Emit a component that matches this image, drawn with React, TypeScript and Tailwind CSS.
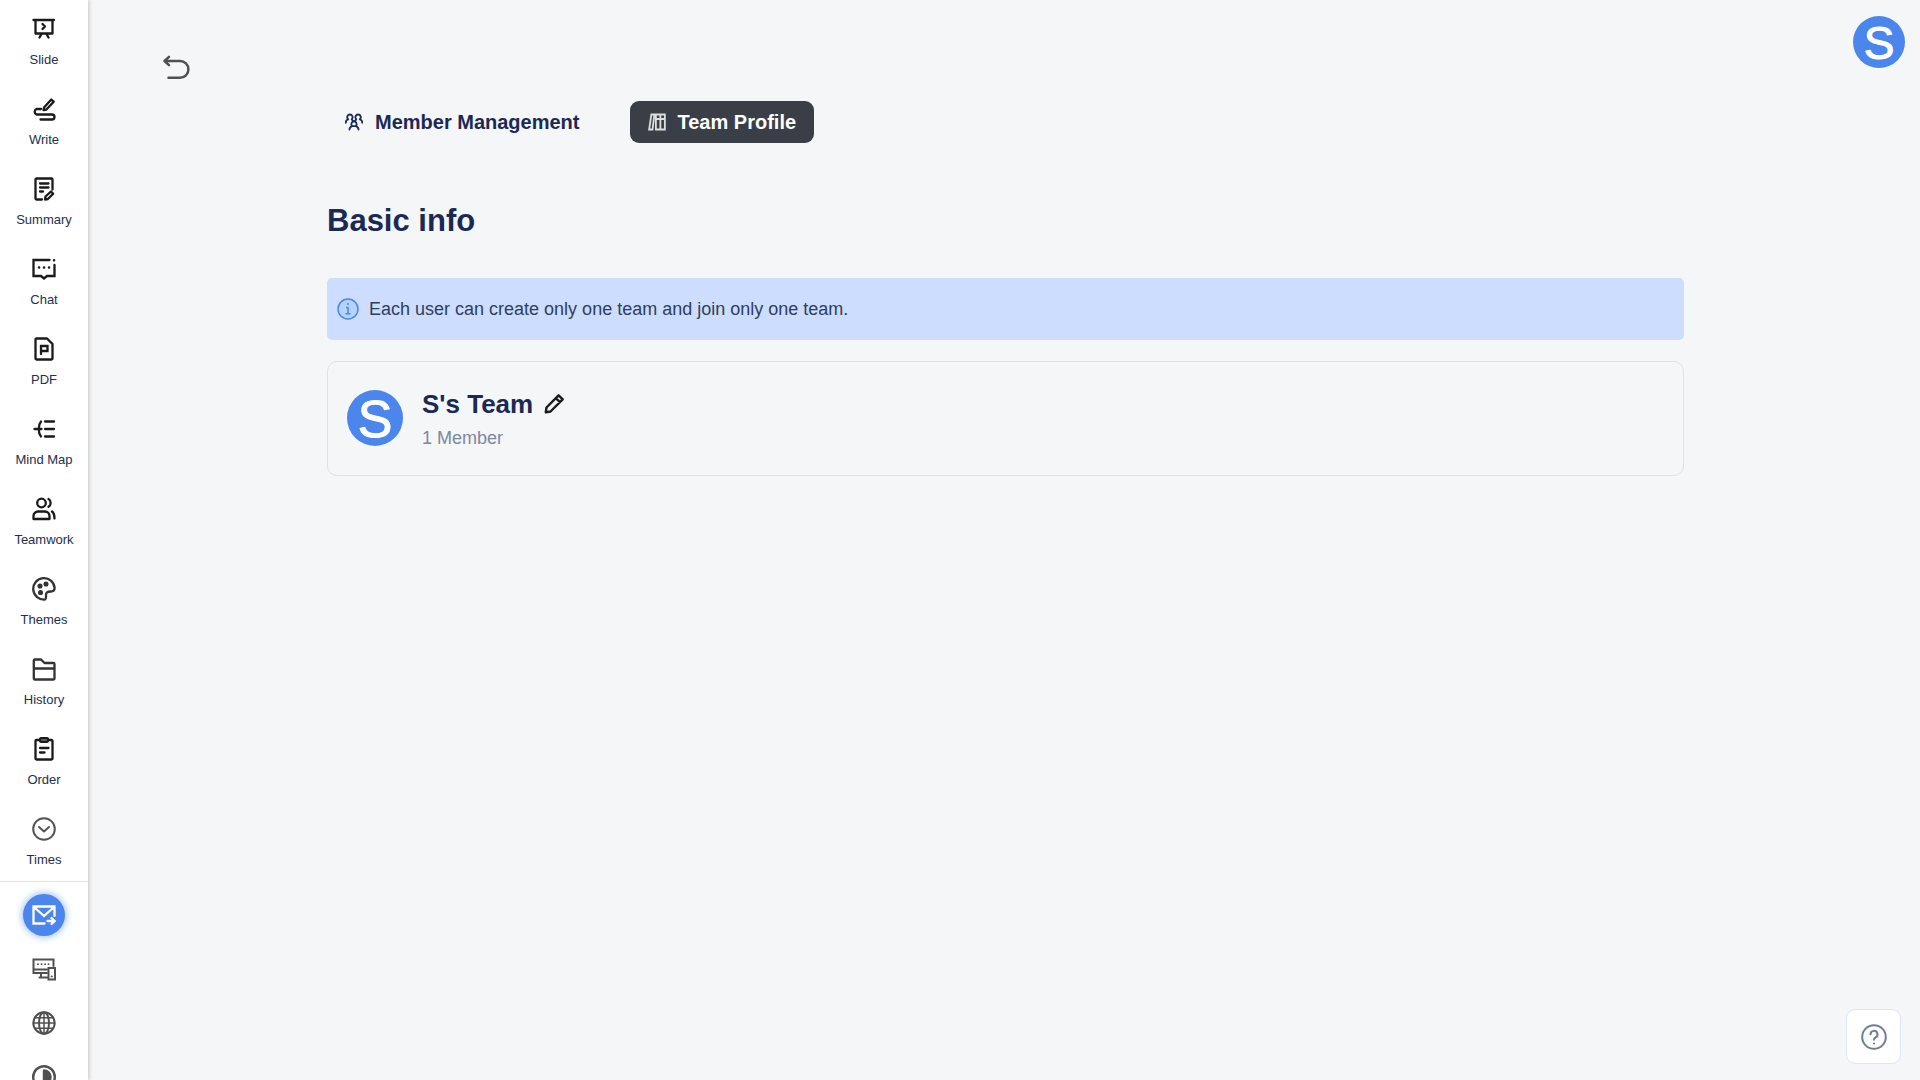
import type { ReactNode } from "react";

type IconProps = { children: ReactNode; className?: string; width?: number };

function Icon({ children, className = "size-6", width = 2.3 }: IconProps) {
  return (
    <svg
      viewBox="0 0 24 24"
      fill="none"
      stroke="currentColor"
      strokeWidth={width}
      strokeLinecap="round"
      strokeLinejoin="round"
      className={className}
      aria-hidden="true"
    >
      {children}
    </svg>
  );
}

const NAV = [
  {
    label: "Slide",
    icon: (
      <Icon>
        <path d="M1.500 3h20.500M3.500 3v13.500h17V3M10.500 7l2.500 2.500-2.500 2.500M9.500 17l-2 3.500M14.500 17l2 3.500" />
      </Icon>
    ),
  },
  {
    label: "Write",
    icon: (
      <Icon>
        <path d="M12 10.500 19.300 2.500l2.400 2.200-7.300 7.800-2.900.6z" />
        <path d="M9 12H4.500a3 3 0 0 0 0 5.500h15.500a2.500 2.500 0 0 1 0 5H8.500" />
      </Icon>
    ),
  },
  {
    label: "Summary",
    icon: (
      <Icon>
        <path d="M20.500 12.500V2.500a1 1 0 0 0-1-1h-15a1 1 0 0 0-1 1v19a1 1 0 0 0 1 1H10M8 6.500h8.500M8 10.500h8.500M8 14.500h3M13.500 19.500l5.500-5 2.200 2.200-5.300 5.300-2.800.5z" />
      </Icon>
    ),
  },
  {
    label: "Chat",
    icon: (
      <Icon>
        <path d="M17.500 3h-16v16H9l3 2.500 3-2.500h7.500V8" strokeLinejoin="miter" />
        <path d="M22 3.200h.1M7 10.500h.1M12 10.500h.1M17 10.500h.1" strokeWidth="2.500" />
      </Icon>
    ),
  },
  {
    label: "PDF",
    icon: (
      <Icon>
        <path d="M3.500 2.500a1 1 0 0 1 1-1H15l5.500 5.500v14.500a1 1 0 0 1-1 1h-15a1 1 0 0 1-1-1z" />
        <path d="M9 17V9h6.500v5H9" strokeLinejoin="miter" />
      </Icon>
    ),
  },
  {
    label: "Mind Map",
    icon: (
      <Icon>
        <path d="M13 4.500h9M13 12h9M13 19.500h9M2.500 12h7M9 4.500c-3 3.500-3 11.500 0 15" />
      </Icon>
    ),
  },
  {
    label: "Teamwork",
    icon: (
      <Icon>
        <circle cx="9.500" cy="6" r="4.300" />
        <path d="M1.500 22v-3a4.500 4.500 0 0 1 4.500-4.500h7a4.500 4.500 0 0 1 4.500 4.500v3zM16.500 2c2.800 1.500 2.800 6.300 0 7.800M20 14.500c1.700 1.300 2.500 3 2.500 7" />
      </Icon>
    ),
  },
  {
    label: "Themes",
    icon: (
      <Icon className="size-6 text-[#333]">
        <path d="M13 22.500A10.700 10.700 0 1 1 22.600 11c0 2.300-1.500 3.500-3.800 3.500-3.500 0-5 1.300-4.800 4 .1 2 .3 3.500-1 4z" />
        <g fill="currentColor" strokeWidth="1.500">
          <circle cx="8" cy="9" r="1.800" />
          <circle cx="14" cy="7" r="1.800" />
          <circle cx="8.500" cy="15.500" r="1.800" />
        </g>
      </Icon>
    ),
  },
  {
    label: "History",
    icon: (
      <Icon className="size-6 text-[#333]">
        <path d="M1.800 21.500v-18a1 1 0 0 1 1-1H9l3.500 3.500h9a1 1 0 0 1 1 1v14.500a1 1 0 0 1-1 1H2.800a1 1 0 0 1-1-1zM2 11.500h20.500" />
      </Icon>
    ),
  },
  {
    label: "Order",
    icon: (
      <Icon>
        <path d="M8 3H4.500a1 1 0 0 0-1 1v17.500a1 1 0 0 0 1 1h15a1 1 0 0 0 1-1V4a1 1 0 0 0-1-1H16M8 11h8.500M8 15.500h4.500" />
        <rect x="8" y="1.200" width="8" height="3.600" rx="1" fill="#777" />
      </Icon>
    ),
  },
  {
    label: "Times",
    icon: (
      <Icon className="size-6 text-[#555]" width={2}>
        <circle cx="12" cy="12" r="10.800" />
        <path d="M7 10l5 4.500 5-4.500" />
      </Icon>
    ),
  },
];

const TOOLS = [
  {
    label: "Devices",
    icon: (
      <Icon width={2}>
        <path d="M15 16H1.500V2.500h20V9M2 12.500h13M9 16.500v3.500M7.500 20.500h8" strokeLinejoin="miter" />
        <path d="M6 7.200h.1M9.500 7.200h.1M13 7.200h.1M16.500 7.200h.1" strokeWidth="1.800" />
        <path d="M16.500 11h6.500v11.500h-6.500zM19.700 19.500h.1" strokeLinejoin="miter" />
      </Icon>
    ),
  },
  {
    label: "Language",
    icon: (
      <Icon width={2}>
        <circle cx="12" cy="12" r="10.700" />
        <ellipse cx="12" cy="12" rx="5" ry="10.700" />
        <path d="M12 1.500v21M1.500 12h21M3 6.800h18M3 17.200h18" strokeWidth="1.500" />
      </Icon>
    ),
  },
  {
    label: "Appearance",
    icon: (
      <Icon width={2.4}>
        <circle cx="12" cy="12" r="10.800" />
        <path d="M12 5.500a6.500 6.500 0 0 1 0 13z" fill="currentColor" />
      </Icon>
    ),
  },
];

function Avatar({ className }: { className: string }) {
  return (
    <div
      className={`flex shrink-0 items-center justify-center rounded-full bg-[#4a86ec] pt-0.5 leading-none text-white [-webkit-text-stroke:1px_white] ${className}`}
    >
      S
    </div>
  );
}

function Sidebar() {
  return (
    <nav className="z-10 flex w-[88px] shrink-0 flex-col overflow-hidden bg-white shadow-[1px_0_4px_rgba(0,0,0,0.2)]">
      <div className="shrink-0 border-b border-[#dfe1e5] pb-px">
        {NAV.map(({ label, icon }) => (
          <a
            key={label}
            href="#"
            className="flex h-20 flex-col items-center gap-2 pt-[17px] text-[13px] leading-[22px] text-[#22304f]"
          >
            <span className="text-[#1a1a1a]">{icon}</span>
            {label}
          </a>
        ))}
      </div>
      <div className="flex shrink-0 flex-col items-center pt-1.5 text-[#505050]">
        <div className="flex h-[54px] items-center">
          <button
            type="button"
            aria-label="Invite"
            className="flex size-[42px] items-center justify-center rounded-full bg-[#4a86ec] text-white shadow-[0_0_8px_#7eacf8]"
          >
            <Icon>
              <path d="M12.500 20.500h-11V3.500h21V13M2 4l10 9L22 4M15.500 18h6M19.500 15l3 3-3 3" strokeLinejoin="miter" />
            </Icon>
          </button>
        </div>
        {TOOLS.map(({ label, icon }) => (
          <button
            key={label}
            type="button"
            aria-label={label}
            className="flex h-[54px] items-center"
          >
            {icon}
          </button>
        ))}
      </div>
    </nav>
  );
}

function Tabs() {
  return (
    <div className="flex gap-8 text-[20px] leading-6 font-bold text-[#1b2a55]">
      <button
        type="button"
        className="flex h-[42px] items-center gap-3 rounded-[9px] px-[18px]"
      >
        <Icon className="size-[18px]" width={2.4}>
          <path d="M1 13c0-2.500 1.200-4 3.300-4.500C1.500 5.500 3.500 2 6.500 2s5 3.500 2.500 6.500L11 11M23 13c0-2.500-1.200-4-3.300-4.500C22.500 5.500 20.500 2 17.500 2s-5 3.500-2.500 6.500L13 11" />
          <path d="M9.500 17.500c-2.500-3 0-6.500 2.500-6.500s5 3.500 2.500 6.500zM9.500 17.500c-2.200.8-3.500 2.300-3.500 4.500M14.500 17.500c2.200.8 3.500 2.300 3.500 4.500" />
        </Icon>
        Member Management
      </button>
      <button
        type="button"
        className="flex h-[42px] items-center gap-3 rounded-[9px] bg-[#3a3e46] px-[18px] text-white"
      >
        <Icon className="size-[18px] text-[#dedede]" width={2.4}>
          <path d="M4.500 2h4L6 22H1.500zM10.500 2h6v20h-6zM16.500 2h6v20h-6M10.500 8h12" strokeLinejoin="miter" />
        </Icon>
        Team Profile
      </button>
    </div>
  );
}

export default function App() {
  return (
    <div className="flex h-screen overflow-hidden bg-[#f4f6f8] font-['Liberation_Sans',Arial,sans-serif]">
      <Sidebar />
      <main className="relative min-w-0 flex-1 pt-[101px] pr-[236px] pl-[239px]">
        <button
          type="button"
          aria-label="Back"
          className="absolute top-[53px] left-[73px] text-[#505050]"
        >
          <svg viewBox="0 0 30 30" fill="none" stroke="currentColor" strokeWidth="2.500" strokeLinecap="round" strokeLinejoin="round" className="size-[30px]">
            <path d="M8 3.800 3.500 8l4.500 4.200M3.500 8H19a8.400 8.400 0 0 1 0 16.800H7.500" />
          </svg>
        </button>
        <Avatar className="absolute top-4 right-[15px] size-[52px] text-[46px]" />

        <Tabs />
        <h1 className="mt-[58px] text-[31px] leading-10 font-bold text-[#1b2a55]">
          Basic info
        </h1>
        <div className="mt-[37px] flex h-[62px] items-center gap-2.5 rounded-[5px] bg-[#cdddfd] px-2.5 text-[18px] leading-6 text-[#2f3d63]">
          <svg viewBox="0 0 22 22" className="size-[22px] shrink-0" fill="none" stroke="#4a86ec" aria-hidden="true">
            <circle cx="11" cy="11" r="10" fill="#b5d3fb" strokeWidth="1.500" />
            <path d="M11 5v2M9 9.500h2v6M8.500 15.800h5" strokeWidth="1.500" />
          </svg>
          Each user can create only one team and join only one team.
        </div>
        <section className="mt-[21px] flex h-[115px] items-center gap-[19px] rounded-[10px] border border-[#dfe1e4] px-[19px] pb-0.5">
          <Avatar className="size-14 text-[52px]" />
          <div>
            <div className="flex items-center gap-2.5">
              <h2 className="text-[26px] leading-10 font-bold text-[#1b2a55]">
                S's Team
              </h2>
              <button type="button" aria-label="Rename team" className="text-[#1a1a1a]">
                <Icon className="size-[22px]" width={2.6}>
                  <path d="M3 21l.8-5.200L17 2.500 21.500 7 8.200 20.200zM14 5.500l4.500 4.500" />
                </Icon>
              </button>
            </div>
            <p className="text-[18px] leading-7 text-[#7c899f]">1 Member</p>
          </div>
        </section>

        <button
          type="button"
          aria-label="Help"
          className="absolute right-[19px] bottom-4 flex size-[55px] items-center justify-center rounded-[9px] border border-[#dde5fa] bg-white text-[#6f7d99]"
        >
          <svg viewBox="0 0 26 26" className="size-[26px]" fill="none" stroke="currentColor" strokeWidth="2" strokeLinecap="round">
            <circle cx="13" cy="13" r="11.800" />
            <path d="M9.500 10.300a3.500 3.500 0 1 1 5 3.200c-1 .5-1.500 1.100-1.500 2.300M13 19.500h.1" />
          </svg>
        </button>
      </main>
    </div>
  );
}
